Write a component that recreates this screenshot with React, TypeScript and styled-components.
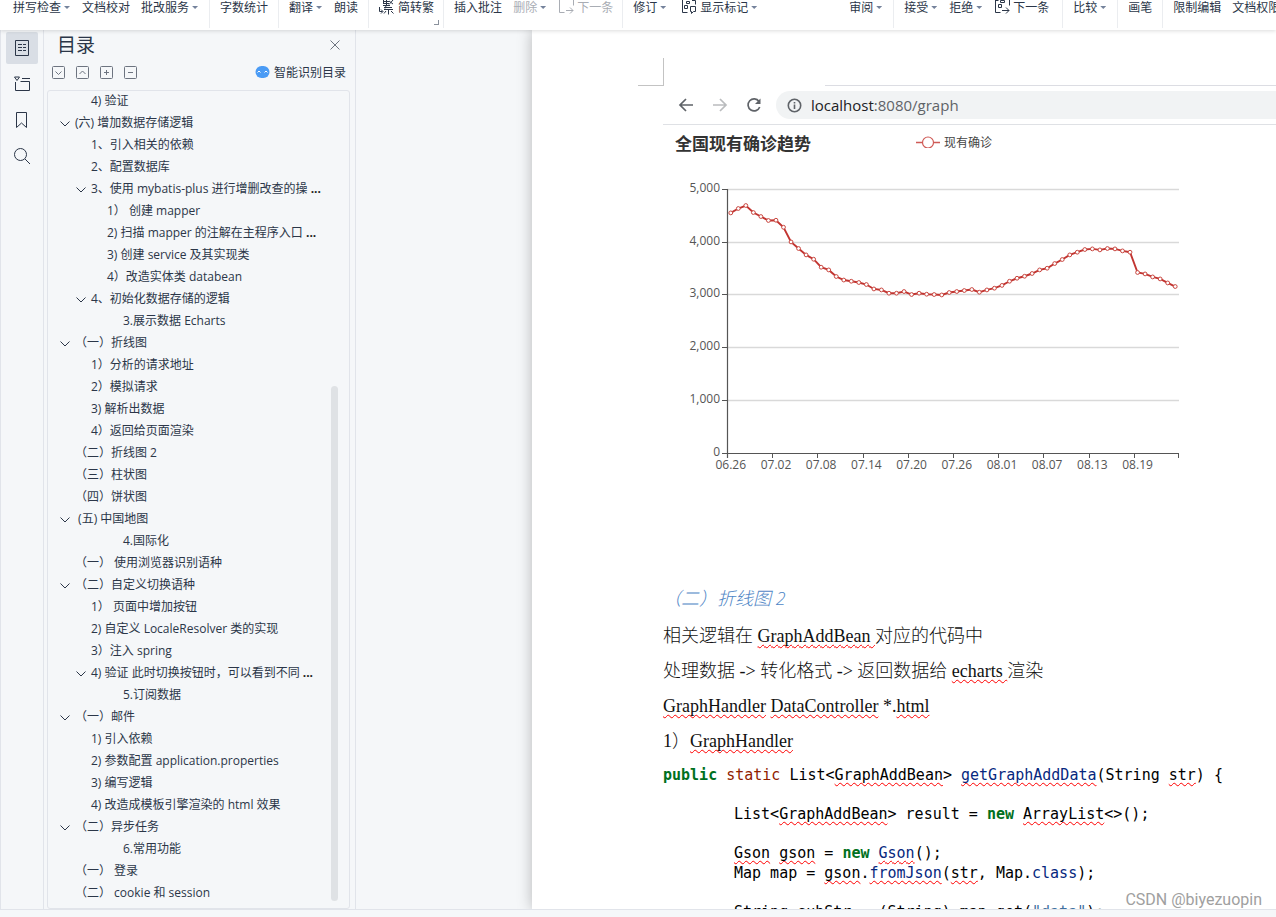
import React from 'react';
import styled, { createGlobalStyle, css } from 'styled-components';

const UI_FONT = '"Open Sans", "Noto Sans CJK SC", sans-serif';
const INK = '#2b3648';
const LINE = '#e1e4ea';
const SURFACE = '#f5f7f9';

const GlobalStyle = createGlobalStyle`
  * { box-sizing: border-box; }
  body { margin: 0; overflow: hidden; background: ${SURFACE}; }
  button { border: 0; padding: 0; background: none; font: inherit; color: inherit; cursor: pointer; }
  svg { display: block; flex: none; }
`;

const Shell = styled.div`
  position: relative;
  display: flex;
  flex-direction: column;
  height: 100vh;
  overflow: hidden;
  font-family: ${UI_FONT};
  font-size: 12px;
  color: ${INK};
`;

/* ---------- ribbon ---------- */

const Ribbon = styled.header`
  position: relative;
  z-index: 2;
  display: flex;
  flex: none;
  height: 30px;
  padding-left: 3px;
  overflow: visible;
  background: #fff;
  box-shadow: 0 1px 4px rgba(0, 0, 0, 0.14);
`;

const RibbonGroup = styled.div<{ $divided?: boolean; $endGap?: number; $gap?: number }>`
  position: relative;
  display: flex;
  flex: none;
  align-items: flex-start;
  gap: ${(p) => p.$gap ?? 11}px;
  height: 28px;
  padding: 0 ${(p) => p.$endGap ?? 10}px 0 10px;
  ${(p) => p.$divided && css`border-right: 1px solid #ebedf0;`}
`;

const RibbonButton = styled.button<{ $menu?: boolean }>`
  display: flex;
  flex: none;
  align-items: center;
  height: 15px;
  line-height: 15px;
  white-space: nowrap;
  margin-right: ${(p) => (p.$menu ? 2 : 0)}px;
  &:disabled { color: #a9adb4; }
`;

const IconSlot = styled.span`
  margin-right: 3px;
`;

const Caret = styled.span`
  width: 6px;
  height: 3px;
  margin: 0 -1px 0 3px;
  background: #75839c;
  clip-path: polygon(0 0, 100% 0, 50% 100%);
`;

const CornerMark = styled.span`
  position: absolute;
  right: 4px;
  bottom: 3px;
  width: 5px;
  height: 5px;
  border: solid #8a919c;
  border-width: 0 1px 1px 0;
`;

/* ---------- side rail and outline panel ---------- */

const Workspace = styled.div`
  display: flex;
  flex: 1;
  min-height: 0;
`;

const Rail = styled.nav`
  display: flex;
  flex: none;
  flex-direction: column;
  align-items: center;
  gap: 4px;
  width: 44px;
  padding-top: 2px;
  border: solid ${LINE};
  border-width: 0 1px;
`;

const RailButton = styled.button<{ $active?: boolean }>`
  display: grid;
  place-items: center;
  width: 32px;
  height: 32px;
  border-radius: 2px;
  background: ${(p) => (p.$active ? '#d9dee5' : 'transparent')};
`;

const Panel = styled.aside`
  display: flex;
  flex: none;
  flex-direction: column;
  width: 312px;
  padding: 0 5px 0 3px;
  border-right: 1px solid ${LINE};
`;

const PanelHead = styled.div`
  display: flex;
  align-items: center;
  justify-content: space-between;
  height: 30px;
  padding: 0 10px;
`;

const PanelTitle = styled.h2`
  margin: 0;
  font-size: 19px;
  font-weight: 400;
  line-height: 28px;
`;

const PanelTools = styled.div`
  display: flex;
  align-items: center;
  gap: 11px;
  height: 24px;
  margin-bottom: 6px;
  padding: 0 4px 0 5px;
`;

const SmartButton = styled.button`
  display: flex;
  align-items: center;
  gap: 4px;
  margin-left: auto;
`;

const TreeBox = styled.div`
  display: flex;
  flex: 1;
  min-height: 0;
  justify-content: space-between;
  padding-right: 11px;
  border: 1px solid ${LINE};
  border-radius: 3px;
  overflow: hidden;
`;

const Tree = styled.ul`
  flex: 1;
  min-width: 0;
  margin: 0;
  padding: 0;
  list-style: none;
`;

const TreeRow = styled.li<{ $level: number }>`
  display: flex;
  align-items: center;
  gap: 5px;
  height: 22px;
  padding-left: ${(p) => 12 + p.$level * 16}px;
`;

const Toggle = styled.span`
  flex: none;
  width: 10px;
`;

const TreeLink = styled.a`
  padding-bottom: 2px;
  color: inherit;
  line-height: 20px;
  text-decoration: none;
  white-space: pre;
`;

const More = styled.b`
  color: #222;
`;

const ScrollThumb = styled.div`
  flex: none;
  width: 7px;
  margin: 295px 0 7px;
  border-radius: 4px;
  background: #dfe2e5;
`;

/* ---------- document ---------- */

const Canvas = styled.main`
  display: flex;
  flex: 1;
  min-width: 0;
  padding-left: 176px;
  overflow: hidden;
`;

const Sheet = styled.article`
  flex: 1;
  min-width: 0;
  background: #fff;
  box-shadow: 0 0 14px rgba(0, 0, 0, 0.26);
`;

const CropMark = styled.div`
  width: 26px;
  height: 28px;
  margin: 28px 0 -1px 106px;
  border: solid #c3c3c3;
  border-width: 0 1px 1px 0;
`;

const Body = styled.div`
  padding-left: 131px;
  overflow: hidden;
`;

const BrowserBar = styled.div`
  display: flex;
  align-items: center;
  height: 39px;
  border-bottom: 1px solid #dfe1e5;
`;

const NavIcons = styled.div`
  display: flex;
  gap: 18px;
  padding: 0 14px 0 15px;
`;

const TabEdge = styled.div`
  height: 1px;
  margin-left: 162px;
  background: #dcdde3;
`;

const Address = styled.div`
  display: flex;
  flex: 1;
  align-items: center;
  gap: 9px;
  height: 28px;
  padding-left: 11px;
  border-radius: 14px 0 0 14px;
  background: #f1f3f4;
  color: #5f6368;
  font-size: 15px;
`;

const Host = styled.span`
  color: #202124;
`;

const ChartHead = styled.div`
  display: flex;
  align-items: center;
  gap: 105px;
  height: 38px;
  padding-left: 12px;
`;

const ChartTitle = styled.h3`
  flex: none;
  margin: 0;
  color: #333;
  font-size: 17px;
  line-height: 24px;
`;

const Legend = styled.div`
  display: flex;
  flex: none;
  align-items: center;
  gap: 4px;
  height: 30px;
  padding-bottom: 4px;
  color: #444;
`;

const Prose = styled.div`
  margin: 95px 0 7px;
  color: #111;
  font-family: "Liberation Serif", "Noto Sans CJK SC", serif;
  font-size: 18px;
`;

const Heading = styled.h4`
  margin: 0 0 2px;
  color: #4f86c6;
  font-family: "Open Sans", "Noto Sans CJK SC", sans-serif;
  font-size: 18px;
  font-style: italic;
  font-weight: 300;
  line-height: 36px;
`;

const Para = styled.p`
  height: 35px;
  margin: 0;
  line-height: 36px;
  white-space: nowrap;
`;

const Han = styled.span`
  font-weight: 300;
`;

const Typo = styled.span`
  text-decoration: underline wavy #f00 1px;
  text-decoration-skip-ink: none;
  text-underline-offset: 2px;
`;

const Code = styled.div`
  color: #000;
  font-family: "DejaVu Sans Mono", "Liberation Mono", monospace;
  font-size: 15px;
  line-height: 20px;
`;

const CodeLine = styled.div<{ $indent?: boolean }>`
  height: 20px;
  padding-left: ${(p) => (p.$indent ? 71 : 0)}px;
  white-space: pre;
`;

const BlankLine = styled.div`
  height: 19px;
`;

const Keyword = styled.b`
  color: #007020;
`;

const Modifier = styled.span`
  color: #902000;
`;

const Fn = styled.span`
  color: #06287e;
`;

const Str = styled.span`
  color: #4070a0;
`;

const Status = styled.footer`
  position: relative;
  flex: none;
  height: 8px;
  border-top: 1px solid ${LINE};
  background: ${SURFACE};
`;

const Watermark = styled.div`
  position: absolute;
  right: 14px;
  bottom: 7px;
  color: #a0a0a0;
  font-family: Roboto, sans-serif;
  font-size: 16px;
  line-height: 20px;
`;

/* ---------- icons ---------- */

const Stroke = ({ w, h, color = INK, children }: { w: number; h: number; color?: string; children: React.ReactNode }) => (
  <svg width={w} height={h} viewBox={`0 0 ${w} ${h}`} fill="none" stroke={color} aria-hidden="true">
    {children}
  </svg>
);

const ConvertIcon = () => (
  <Stroke w={16} h={15}>
    <path d="M4.500 0v3.500M4 1.500h6M4 3.500h6M7.500 0v5M10 1l4 3M14 0l-4 4.500M4 5.500h7M5 7.500h8M7 6l-1 2.500M5 9.500h9M9.500 9.500v5M7 11l-2 2.500M12 11l2.500 2.500M.5 7v4.500h3M2 9.500l2 2-2 2" />
  </Stroke>
);

const NextIcon = ({ color, filled }: { color?: string; filled?: boolean }) => (
  <Stroke w={16} h={15} color={color}>
    <path d="M1.500 0v12.500h5M15.500 0v5.500M8 10.500h7M12 7.500l3 3-3 3" />
    {filled && <path d="M1.500 .5h3M4.500 4.500h3v3h-3zM6.500 .5h4v2h-4z" />}
  </Stroke>
);

const MarkupIcon = () => (
  <Stroke w={16} h={15}>
    <path d="M1.500 0v12.500h5M3.500 5.500h3v3h-3zM5.500 1.500h3v2h-3zM11 .5h3.500v4M9.500 6.500h5v5h-2l-2 2v-2h-1z" />
  </Stroke>
);

const Chevron = () => (
  <Stroke w={10} h={6}>
    <path d="M.5.5 5 5 9.500.5" />
  </Stroke>
);

const BoxIcon = ({ d }: { d: string }) => (
  <Stroke w={13} h={13} color="#6d7480">
    <rect x=".5" y=".5" width="12" height="12" rx="1" />
    <path d={d} />
  </Stroke>
);

/* ---------- chart ---------- */

const SERIES = [
  4556, 4639, 4696, 4563, 4487, 4412, 4417, 4284, 4005, 3880, 3759, 3677, 3525, 3474, 3349, 3282, 3259, 3235, 3197, 3113,
  3094, 3032, 3032, 3064, 3007, 3032, 3013, 3007, 2999, 3045, 3064, 3083, 3102, 3051, 3094, 3127, 3180, 3259, 3316, 3354,
  3406, 3474, 3506, 3595, 3671, 3759, 3810, 3861, 3873, 3854, 3880, 3873, 3835, 3810, 3425, 3398, 3341, 3303, 3227, 3159,
];
const DATES = ['06.26', '07.02', '07.08', '07.14', '07.20', '07.26', '08.01', '08.07', '08.13', '08.19'];
const X0 = 64;
const X1 = 516;
const Y0 = 290;
const STEP = (X1 - X0) / SERIES.length;
const yOf = (v: number) => Y0 - v * 0.0527;
const POINTS = SERIES.map((v, i) => [X0 + STEP * (i + 0.5), yOf(v)]);

const Chart = () => (
  <svg width="530" height="322" viewBox="0 0 530 322" role="img" aria-label="全国现有确诊趋势" fontFamily="Open Sans, sans-serif" fontSize="12" fill="#555">
    {[0, 1000, 2000, 3000, 4000, 5000].map((v) => {
      const y = Math.floor(yOf(v));
      return (
        <g key={v}>
          {v > 0 && <path d={`M${X0} ${y + 0.5}H${X1}`} stroke="#d9d9d9" strokeWidth="1.300" />}
          <path d={`M${X0 - 5} ${y + 0.5}h5`} stroke="#555" />
          <text x={X0 - 7} y={y + 3} textAnchor="end">{v.toLocaleString('en-US')}</text>
        </g>
      );
    })}
    <path d={`M${X0 + 0.5} 26V${Y0 + 5}M${X0} ${Y0 + 0.5}H${X1}`} stroke="#555" strokeWidth="1.200" fill="none" />
    {[...DATES, ''].map((d, i) => (
      <g key={i}>
        <path d={`M${Math.round(X0 + i * STEP * 6) + (i === 10 ? -0.5 : 0.5)} ${Y0}v5`} stroke="#555" />
        <text x={X0 + STEP * (i * 6 + 0.5)} y={Y0 + 16} textAnchor="middle">{d}</text>
      </g>
    ))}
    <polyline points={POINTS.map((p) => p.join(',')).join(' ')} fill="none" stroke="#c23531" strokeWidth="1.900" />
    {POINTS.map(([x, y]) => (
      <circle key={x} cx={x} cy={y} r="1.900" fill="#fff" stroke="#c9463f" strokeWidth="1" />
    ))}
  </svg>
);

/* ---------- data ---------- */

type Node = [level: number, text: string, open?: boolean, cut?: boolean];

const OUTLINE: Node[] = [
  [1, '4) 验证'],
  [0, '(六) 增加数据存储逻辑', true],
  [1, '1、引入相关的依赖'],
  [1, '2、配置数据库'],
  [1, '3、使用 mybatis-plus 进行增删改查的操', true, true],
  [2, '1） 创建 mapper'],
  [2, '2) 扫描 mapper 的注解在主程序入口', false, true],
  [2, '3) 创建 service 及其实现类'],
  [2, '4）改造实体类 databean'],
  [1, '4、初始化数据存储的逻辑', true],
  [3, '3.展示数据 Echarts'],
  [0, '（一）折线图', true],
  [1, '1）分析的请求地址'],
  [1, '2）模拟请求'],
  [1, '3) 解析出数据'],
  [1, '4）返回给页面渲染'],
  [0, '（二）折线图 2'],
  [0, '（三）柱状图'],
  [0, '（四）饼状图'],
  [0, ' (五) 中国地图', true],
  [3, '4.国际化'],
  [0, '（一） 使用浏览器识别语种'],
  [0, '（二）自定义切换语种', true],
  [1, '1） 页面中增加按钮'],
  [1, '2) 自定义 LocaleResolver 类的实现'],
  [1, '3）注入 spring'],
  [1, '4) 验证 此时切换按钮时，可以看到不同', true, true],
  [3, '5.订阅数据'],
  [0, '（一）邮件', true],
  [1, '1) 引入依赖'],
  [1, '2) 参数配置 application.properties'],
  [1, '3) 编写逻辑'],
  [1, '4) 改造成模板引擎渲染的 html 效果'],
  [0, '（二）异步任务', true],
  [3, '6.常用功能'],
  [0, '（一） 登录'],
  [0, '（二） cookie 和 session'],
];

const Tool = ({ label, menu, icon, disabled }: { label: string; menu?: boolean; icon?: React.ReactNode; disabled?: boolean }) => (
  <RibbonButton type="button" $menu={menu} disabled={disabled}>
    {icon && <IconSlot>{icon}</IconSlot>}
    {label}
    {menu && <Caret />}
  </RibbonButton>
);

export default function App() {
  return (
    <Shell>
      <GlobalStyle />
      <Ribbon>
        <RibbonGroup $divided>
          <Tool label="拼写检查" menu />
          <Tool label="文档校对" />
          <Tool label="批改服务" menu />
        </RibbonGroup>
        <RibbonGroup $divided>
          <Tool label="字数统计" />
        </RibbonGroup>
        <RibbonGroup $divided>
          <Tool label="翻译" menu />
          <Tool label="朗读" />
        </RibbonGroup>
        <RibbonGroup $divided $endGap={9}>
          <Tool label="简转繁" icon={<ConvertIcon />} />
          <CornerMark />
        </RibbonGroup>
        <RibbonGroup $divided $endGap={9}>
          <Tool label="插入批注" />
          <Tool label="删除" menu disabled />
          <Tool label="下一条" icon={<NextIcon color="#a9adb4" />} disabled />
        </RibbonGroup>
        <RibbonGroup $endGap={81} $gap={14}>
          <Tool label="修订" menu />
          <Tool label="显示标记" menu icon={<MarkupIcon />} />
        </RibbonGroup>
        <RibbonGroup $divided>
          <Tool label="审阅" menu />
        </RibbonGroup>
        <RibbonGroup $divided $endGap={13}>
          <Tool label="接受" menu />
          <Tool label="拒绝" menu />
          <Tool label="下一条" icon={<NextIcon filled />} />
        </RibbonGroup>
        <RibbonGroup $divided>
          <Tool label="比较" menu />
        </RibbonGroup>
        <RibbonGroup $divided>
          <Tool label="画笔" />
        </RibbonGroup>
        <RibbonGroup>
          <Tool label="限制编辑" />
          <Tool label="文档权限" />
        </RibbonGroup>
      </Ribbon>

      <Workspace>
        <Rail>
          <RailButton type="button" $active aria-label="目录">
            <Stroke w={16} h={16}>
              <path d="M1.500.5h13v15h-13zM4 4.500h4M9 4.500h3M4 7.500h4M9 7.500h3M4 10.500h4M9 10.500h3" />
            </Stroke>
          </RailButton>
          <RailButton type="button" aria-label="章节">
            <Stroke w={16} h={16}>
              <path d="M.5 1h5L3 4.500zM8 2.500h8M1.500 6v8.500h14V5.500h-9" />
            </Stroke>
          </RailButton>
          <RailButton type="button" aria-label="书签">
            <Stroke w={16} h={16}>
              <path d="M2.500.5h10v15l-5-4.500-5 4.500z" />
            </Stroke>
          </RailButton>
          <RailButton type="button" aria-label="查找">
            <Stroke w={16} h={16}>
              <circle cx="6.500" cy="6.500" r="6" />
              <path d="m11 11 5 5" />
            </Stroke>
          </RailButton>
        </Rail>

        <Panel>
          <PanelHead>
            <PanelTitle>目录</PanelTitle>
            <button type="button" aria-label="关闭">
              <Stroke w={10} h={10} color="#6d7480">
                <path d="m.5.5 9 9M9.500.5l-9 9" />
              </Stroke>
            </button>
          </PanelHead>
          <PanelTools>
            <button type="button" aria-label="展开"><BoxIcon d="m3.500 5.500 3 3 3-3" /></button>
            <button type="button" aria-label="收起"><BoxIcon d="m3.500 8 3-3 3 3" /></button>
            <button type="button" aria-label="增加"><BoxIcon d="M4 6.500h5M6.500 4v5" /></button>
            <button type="button" aria-label="减少"><BoxIcon d="M4 6.500h5" /></button>
            <SmartButton type="button">
              <svg width="15" height="12" viewBox="0 0 15 12" aria-hidden="true">
                <rect x=".5" width="14" height="12" rx="6" fill="#4a9bf5" />
                <path d="M2.500 6.500 4 5l1.500 1.500M9.500 6.500 11 5l1.500 1.500" fill="none" stroke="#fff" />
              </svg>
              智能识别目录
            </SmartButton>
          </PanelTools>
          <TreeBox>
            <Tree>
              {OUTLINE.map(([level, text, open, cut], i) => (
                <TreeRow key={i} $level={level}>
                  <Toggle>{open && <Chevron />}</Toggle>
                  <TreeLink href="#">
                    {text}
                    {cut && <More> ...</More>}
                  </TreeLink>
                </TreeRow>
              ))}
            </Tree>
            <ScrollThumb />
          </TreeBox>
        </Panel>

        <Canvas>
          <Sheet>
            <CropMark />
            <Body>
              <TabEdge />
              <BrowserBar>
                <NavIcons>
                  <Stroke w={16} h={16} color="#5f6368">
                    <path d="M15 8H2M8 2 2 8l6 6" strokeWidth="1.700" />
                  </Stroke>
                  <Stroke w={16} h={16} color="#babcbe">
                    <path d="M1 8h13M8 2l6 6-6 6" strokeWidth="1.700" />
                  </Stroke>
                  <Stroke w={16} h={16} color="#5f6368">
                    <path d="M13 4.500A6 6 0 1 0 13.700 10" strokeWidth="1.700" />
                    <path d="M14.500 1.500v5.500H9z" fill="#5f6368" stroke="none" />
                  </Stroke>
                </NavIcons>
                <Address>
                  <Stroke w={15} h={15} color="#5f6368">
                    <circle cx="7.500" cy="7.500" r="6.200" strokeWidth="1.600" />
                    <path d="M7.500 6.500v4.500M7.500 4v1.500" strokeWidth="1.600" />
                  </Stroke>
                  <span><Host>localhost</Host>:8080/graph</span>
                </Address>
              </BrowserBar>
              <ChartHead>
                <ChartTitle>全国现有确诊趋势</ChartTitle>
                <Legend>
                  <Stroke w={24} h={12} color="#cf5a56">
                    <path d="M0 6.500h6M18 6.500h6" strokeWidth="1.400" />
                    <circle cx="12" cy="6.500" r="5.500" strokeWidth="1.200" fill="#fff" />
                  </Stroke>
                  现有确诊
                </Legend>
              </ChartHead>
              <Chart />
              <Prose>
                <Heading>（二）折线图 2</Heading>
                <Para>
                  <Han>相关逻辑在</Han> <Typo>GraphAddBean </Typo><Han>对应的代码中</Han>
                </Para>
                <Para>
                  <Han>处理数据</Han> -&gt; <Han>转化格式</Han> -&gt; <Han>返回数据给</Han> <Typo>echarts </Typo><Han>渲染</Han>
                </Para>
                <Para>
                  <Typo>GraphHandler</Typo> <Typo>DataController</Typo> *.<Typo>html</Typo>
                </Para>
                <Para>
                  1<Han>）</Han><Typo>GraphHandler</Typo>
                </Para>
              </Prose>
              <Code>
                <CodeLine>
                  <Keyword>public</Keyword> <Modifier>static</Modifier>{' List<'}<Typo>GraphAddBean</Typo>{'> '}
                  <Fn><Typo>getGraphAddData</Typo></Fn>(String <Typo>str</Typo>{') {'}
                </CodeLine>
                <BlankLine />
                <CodeLine $indent>
                  {'List<'}<Typo>GraphAddBean</Typo>{'> result = '}<Keyword>new</Keyword> <Typo>ArrayList</Typo>{'<>();'}
                </CodeLine>
                <BlankLine />
                <CodeLine $indent>
                  <Typo>Gson</Typo> <Typo>gson</Typo> = <Keyword>new</Keyword> <Fn><Typo>Gson</Typo></Fn>();
                </CodeLine>
                <CodeLine $indent>
                  Map map = <Typo>gson</Typo>.<Fn><Typo>fromJson</Typo></Fn>(<Typo>str</Typo>, Map.<Fn>class</Fn>);
                </CodeLine>
                <BlankLine />
                <CodeLine $indent>
                  String subStr = (String) map.get(<Str>"data"</Str>);
                </CodeLine>
              </Code>
            </Body>
          </Sheet>
        </Canvas>
      </Workspace>
      <Status />
      <Watermark>CSDN @biyezuopin</Watermark>
    </Shell>
  );
}
